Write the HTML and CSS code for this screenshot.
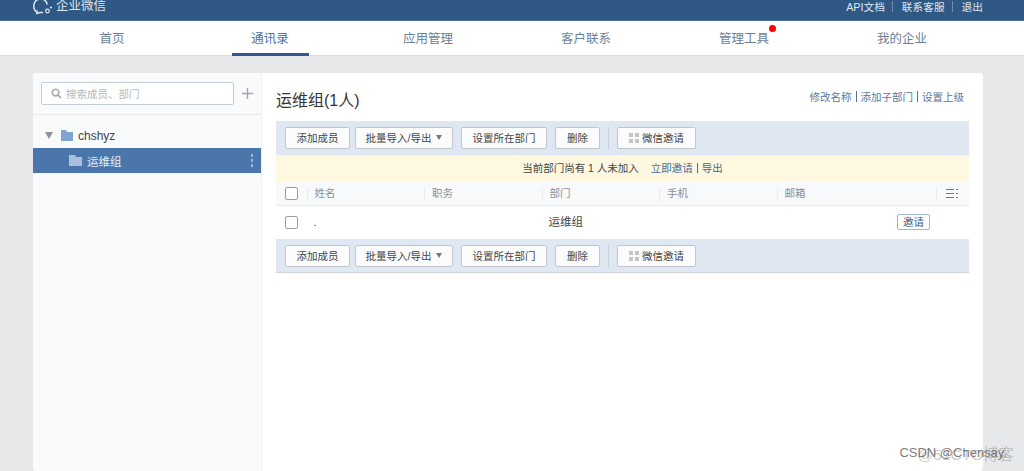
FILE: index.html
```html
<!DOCTYPE html>
<html lang="zh-CN">

<head>
    <meta charset="UTF-8">
    <meta name="viewport" content="width=device-width, initial-scale=1.0">
    <link rel="stylesheet" href="styles.css">
    <title>企业微信</title>
</head>

<body>
    <div class="top">
        <div class="logo">
            <svg width="20" height="15" viewBox="0 0 20 15">
                <path d="M4 12C1.500 10.500 .8 8.500 .8 6C.8 2 3.500 -1 7.500 -1C11 -1 13.500 1 14.200 4.500" fill="none" stroke="#dfe6ee" stroke-width="1.500"/>
                <path d="M4 10.500V13.500L7 12.500H10" fill="none" stroke="#dfe6ee" stroke-width="1.500"/>
                <circle cx="14.500" cy="11" r="1.800" fill="none" stroke="#dfe6ee" stroke-width="1.200"/>
                <circle cx="18" cy="7.500" r="1.100" fill="#dfe6ee"/>
            </svg>
            <span>企业微信</span>
        </div>
        <div class="top-links">
            <a>API文档</a><i></i><a>联系客服</a><i></i><a>退出</a>
        </div>
    </div>

    <div class="nav">
        <a>首页</a>
        <a class="active">通讯录</a>
        <a>应用管理</a>
        <a>客户联系</a>
        <a><span class="dot-wrap">管理工具<b class="dot"></b></span></a>
        <a>我的企业</a>
    </div>

    <div class="card">
        <div class="side">
            <div class="search-row">
                <div class="search">
                    <svg width="11" height="11" viewBox="0 0 12 12">
                        <circle cx="5" cy="5" r="3.600" fill="none" stroke="#a9acb0" stroke-width="1.800"/>
                        <path d="M7.800 7.800L11 11" stroke="#a9acb0" stroke-width="2"/>
                    </svg>
                    <span>搜索成员、部门</span>
                </div>
                <svg class="plus" width="11" height="11" viewBox="0 0 12 12">
                    <path d="M6 0V12M0 6H12" stroke="#a3a7ab" stroke-width="1.500"/>
                </svg>
            </div>
            <div class="tree-item">
                <span class="arrow"></span>
                <svg width="12" height="11" viewBox="0 0 12 11">
                    <path d="M0 0H5L6 2H12V11H0Z" fill="#7fa4d0"/>
                </svg>
                <span>chshyz</span>
            </div>
            <div class="tree-item selected">
                <svg width="13" height="11" viewBox="0 0 13 11">
                    <path d="M0 0H6L7 2H13V11H0Z" fill="#a9bfdb"/>
                </svg>
                <span>运维组</span>
                <span class="more"><b></b><b></b><b></b></span>
            </div>
        </div>

        <div class="main">
            <div class="title-row">
                <h1>运维组(1人)</h1>
                <div class="title-links">
                    <a>修改名称</a><i></i><a>添加子部门</a><i></i><a>设置上级</a>
                </div>
            </div>

            <div class="toolbar">
                <button class="btn btn-add">添加成员</button>
                <button class="btn btn-import">批量导入/导出<span class="caret"></span></button>
                <button class="btn btn-dept">设置所在部门</button>
                <button class="btn btn-del">删除</button>
                <span class="sep"></span>
                <button class="btn btn-wx">
                    <svg width="10" height="10" viewBox="0 0 10 10">
                        <path d="M0 0H4V4H0ZM6 0H10V4H6ZM0 6H4V10H0ZM6 6H10V10H6Z" fill="#c3c5c8"/>
                    </svg>
                    微信邀请
                </button>
            </div>

            <div class="notice">
                当前部门尚有 1 人未加入<a class="invite">立即邀请</a><i></i><a>导出</a>
            </div>

            <div class="row head">
                <div class="col-check"><span class="check"></span></div>
                <div class="col">姓名</div>
                <div class="col">职务</div>
                <div class="col">部门</div>
                <div class="col">手机</div>
                <div class="col-mail">邮箱</div>
                <div class="col-set">
                    <svg width="12" height="9" viewBox="0 0 12 9">
                        <path d="M0 .5H8M0 4.500H8M0 8.500H8M10 .5H12M10 4.500H12M10 8.500H12" stroke="#5f7ea6" stroke-width="1"/>
                    </svg>
                </div>
            </div>

            <div class="row body-row">
                <div class="col-check"><span class="check"></span></div>
                <div class="col">.</div>
                <div class="col"></div>
                <div class="col">运维组</div>
                <div class="col"></div>
                <div class="col-mail"></div>
                <button class="invite-btn">邀请</button>
            </div>

            <div class="toolbar last">
                <button class="btn btn-add">添加成员</button>
                <button class="btn btn-import">批量导入/导出<span class="caret"></span></button>
                <button class="btn btn-dept">设置所在部门</button>
                <button class="btn btn-del">删除</button>
                <span class="sep"></span>
                <button class="btn btn-wx">
                    <svg width="10" height="10" viewBox="0 0 10 10">
                        <path d="M0 0H4V4H0ZM6 0H10V4H6ZM0 6H4V10H0ZM6 6H10V10H6Z" fill="#c3c5c8"/>
                    </svg>
                    微信邀请
                </button>
            </div>
        </div>
    </div>

    <div class="mark mark-back">@51CTO博客</div>
    <div class="mark">CSDN @Chensay.</div>
</body>

</html>
```
FILE: styles.css
```css
* {
    margin: 0;
    padding: 0;
    box-sizing: border-box;
}

html,
body {
    height: 471px;
    overflow: hidden;
}

body {
    background-color: #e7e8ea;
    font-family: "Liberation Sans", "Noto Sans CJK SC", sans-serif;
    font-size: 12px;
    color: #333;
}

.top {
    height: 21px;
    background-color: #305884;
    border-bottom: 1px solid #4a6f9c;
    padding: 0 41px 0 33px;
    display: flex;
    justify-content: space-between;
    align-items: flex-start;
    color: #dfe6ee;
}

.logo {
    display: flex;
    align-items: flex-start;
    gap: 3px;
    font-size: 12.500px;
    line-height: 13px;
}

.top-links {
    display: flex;
    align-items: center;
    font-size: 10.700px;
    height: 12px;
}

.top-links i {
    width: 1px;
    height: 11px;
    background-color: #6f8eb2;
    margin: 0 9px 0 7px;
}

.nav {
    height: 35px;
    background-color: #fff;
    border-bottom: 1px solid #dedfe1;
    padding-left: 33px;
    display: flex;
}

.nav a {
    width: 158px;
    display: flex;
    justify-content: center;
    align-items: center;
    height: 33px;
    font-size: 12.500px;
    color: #6a7f99;
    position: relative;
}

.nav a.active {
    color: #4a719f;
}

.nav a.active::after {
    content: "";
    position: absolute;
    left: 41px;
    bottom: -2px;
    width: 77px;
    height: 3px;
    background-color: #30588a;
}

.dot-wrap {
    position: relative;
}

.dot {
    position: absolute;
    right: -7px;
    top: -3px;
    width: 7px;
    height: 7px;
    border-radius: 50%;
    background-color: #f00;
}

.card {
    margin: 17px 41px 0 33px;
    height: 398px;
    display: flex;
    background-color: #fff;
    border-radius: 4px;
    overflow: hidden;
}

.side {
    width: 229px;
    background-color: #f8fafc;
    border-right: 1px solid #eef0f3;
}

.search-row {
    height: 42px;
    padding: 9px 8px 0;
    border-bottom: 1px solid #e8eaed;
    display: flex;
    gap: 8px;
}

.search {
    width: 193px;
    height: 23px;
    background-color: #fff;
    border: 1px solid #c5ccd6;
    border-radius: 2px;
    display: flex;
    align-items: center;
    gap: 4px;
    padding-left: 9px;
    font-size: 10.500px;
    color: #b5b8bc;
}

.plus {
    margin-top: 6px;
}

.tree-item {
    height: 25px;
    display: flex;
    align-items: center;
    gap: 5px;
    padding-left: 12px;
    color: #444;
    margin-top: 8px;
}

.arrow {
    width: 0;
    height: 0;
    border-left: 4px solid transparent;
    border-right: 4px solid transparent;
    border-top: 7px solid #8f9296;
    margin-right: 3px;
}

.tree-item.selected {
    margin-top: 0;
    padding-left: 36px;
    background-color: #4a76ab;
    color: #e9eff6;
    font-size: 11.500px;
    position: relative;
}

.more {
    position: absolute;
    right: 8px;
    top: 6px;
    display: flex;
    flex-direction: column;
    gap: 2px;
}

.more b {
    width: 2px;
    height: 3px;
    background-color: #9db6d4;
}

.main {
    flex: 1;
    padding: 0 14px;
}

.title-row {
    height: 48px;
    display: flex;
    justify-content: space-between;
    align-items: flex-start;
}

h1 {
    font-size: 16px;
    font-weight: normal;
    color: #333;
    margin-top: 17px;
    line-height: 22px;
}

.title-links {
    display: flex;
    align-items: center;
    font-size: 10.500px;
    color: #56779c;
    margin: 16px 5px 0 0;
}

.title-links i {
    width: 1px;
    height: 11px;
    background-color: #56779c;
    margin: 0 4px;
}

.toolbar {
    height: 34px;
    background-color: #dfe7f2;
    padding: 6px 0 0 9px;
    display: flex;
    align-items: flex-start;
    gap: 8px;
}

.toolbar.last {
    border-bottom: 1px solid #cfd5dc;
}

.btn {
    height: 22px;
    padding-bottom: 1px;
    background-color: #fcfcfc;
    border: 1px solid #c2c5c9;
    border-radius: 2px;
    font-family: inherit;
    font-size: 10.500px;
    color: #444;
    display: flex;
    justify-content: center;
    align-items: center;
    gap: 3px;
}

.btn-add {
    width: 65px;
    margin-right: -3px;
}

.btn-import {
    width: 98px;
}

.btn-dept {
    width: 86px;
}

.btn-del {
    width: 45px;
}

.btn-wx {
    width: 79px;
}

.caret {
    width: 0;
    height: 0;
    border-left: 3px solid transparent;
    border-right: 3px solid transparent;
    border-top: 5px solid #777;
    margin-left: 2px;
}

.sep {
    width: 1px;
    height: 22px;
    background-color: #c9d0da;
}

.notice {
    height: 27px;
    padding-bottom: 2px;
    background-color: #fef8e1;
    display: flex;
    align-items: center;
    justify-content: center;
    font-size: 10.500px;
    color: #444;
}

.notice a {
    color: #3f6a9c;
}

.notice .invite {
    margin-left: 12px;
}

.notice i {
    width: 1px;
    height: 10px;
    background-color: #3f6a9c;
    margin: 0 4px;
}

.row {
    display: flex;
    align-items: center;
    font-size: 10.500px;
}

.head {
    height: 24px;
    background-color: #f8f9fb;
    border-bottom: 1px solid #e9ebee;
    color: #8c8f94;
}

.body-row {
    height: 33px;
    color: #444;
    position: relative;
}

.col-check {
    width: 30.500px;
    padding-left: 9px;
    display: flex;
}

.check {
    width: 13px;
    height: 13px;
    background-color: #fff;
    border: 1px solid #9a9da1;
    border-radius: 2px;
}

.col {
    width: 117.500px;
    height: 14px;
    line-height: 12px;
    padding-left: 7px;
}

.body-row .col {
    font-size: 11.500px;
    color: #444;
}

.col-mail {
    width: 159px;
    height: 14px;
    line-height: 12px;
    padding-left: 7px;
}

.head .col,
.head .col-mail,
.head .col-set {
    border-left: 1px solid #e9ebee;
}

.col-set {
    height: 14px;
    padding-left: 9px;
    display: flex;
    align-items: center;
}

.invite-btn {
    position: absolute;
    left: 621px;
    top: 8px;
    width: 33px;
    height: 16px;
    background-color: #fff;
    border: 1px solid #9db6d4;
    border-radius: 2px;
    font-family: inherit;
    font-size: 10.500px;
    line-height: 12px;
    color: #44617f;
}

.mark {
    position: absolute;
    right: 17px;
    top: 445px;
    font-size: 13px;
    color: rgba(90, 90, 90, 0.8);
}

.mark-back {
    right: 10px;
    top: 442px;
    font-size: 15.500px;
    color: rgba(150, 150, 150, 0.5);
}
```
